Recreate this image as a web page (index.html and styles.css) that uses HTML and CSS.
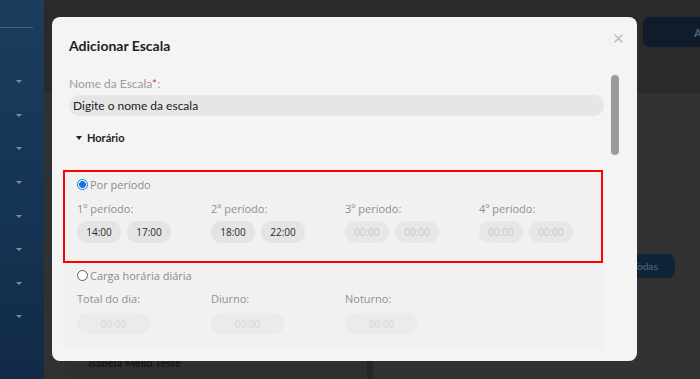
FILE: index.html
```html
<!DOCTYPE html>
<html lang="pt-BR">
<head>
<meta charset="utf-8">
<title>Adicionar Escala</title>
<link rel="stylesheet" href="styles.css">
</head>
<body>
<div class="app">
  <aside class="sidebar">
    <div class="sidebar-line"></div>
    <ul class="menu">
      <li><span class="caret"></span></li>
      <li><span class="caret"></span></li>
      <li><span class="caret"></span></li>
      <li><span class="caret"></span></li>
      <li><span class="caret"></span></li>
      <li><span class="caret"></span></li>
      <li><span class="caret"></span></li>
      <li><span class="caret"></span></li>
    </ul>
  </aside>
  <main class="main">
    <header class="topbar">
      <button class="btn-top">Adicionar</button>
    </header>
    <section class="content">
      <div class="card-left"><span class="person">Isabela Mello Teste</span></div>
      <div class="divider"></div>
      <div class="card-right"><button class="btn-todas">Todas</button></div>
    </section>
  </main>

  <div class="overlay">
    <div class="modal">
      <button class="close" aria-label="Fechar">
        <svg width="9" height="9" viewBox="0 0 9 9"><path d="M1 1L8 8M8 1L1 8" stroke="#bdbdbd" stroke-width="1.6" stroke-linecap="round"/></svg>
      </button>
      <div class="modal-header">
        <h2 class="modal-title">Adicionar Escala</h2>
      </div>
      <div class="modal-body">
        <div class="form">
          <div class="field">
            <label class="field-label">Nome da Escala<span class="req">*</span>:</label>
            <div class="input">Digite o nome da escala</div>
          </div>
          <div class="section-toggle"><span class="tri"></span>Horário</div>
          <div class="panel">
            <div class="option option-active">
              <div class="radio-row"><span class="radio checked"></span>Por período</div>
              <div class="periods">
                <div class="period">
                  <div class="period-label">1º período:</div>
                  <div class="pills"><span class="pill">14:00</span><span class="pill">17:00</span></div>
                </div>
                <div class="period">
                  <div class="period-label">2º período:</div>
                  <div class="pills"><span class="pill">18:00</span><span class="pill">22:00</span></div>
                </div>
                <div class="period">
                  <div class="period-label">3º período:</div>
                  <div class="pills"><span class="pill empty">00:00</span><span class="pill empty">00:00</span></div>
                </div>
                <div class="period">
                  <div class="period-label">4º período:</div>
                  <div class="pills"><span class="pill empty">00:00</span><span class="pill empty">00:00</span></div>
                </div>
              </div>
            </div>
            <div class="option option-second">
              <div class="radio-row"><span class="radio"></span>Carga horária diária</div>
              <div class="periods periods-second">
                <div class="period">
                  <div class="period-label">Total do dia:</div>
                  <div class="pills"><span class="pill wide disabled">00:00</span></div>
                </div>
                <div class="period">
                  <div class="period-label">Diurno:</div>
                  <div class="pills"><span class="pill wide disabled">00:00</span></div>
                </div>
                <div class="period">
                  <div class="period-label">Noturno:</div>
                  <div class="pills"><span class="pill wide disabled">00:00</span></div>
                </div>
              </div>
            </div>
          </div>
        </div>
        <div class="scrollbar"></div>
      </div>
    </div>
  </div>
</div>
</body>
</html>
```

FILE: styles.css
```css
* { box-sizing: border-box; }
html, body { margin: 0; padding: 0; }
body {
  width: 700px;
  height: 379px;
  overflow: hidden;
  background: #2b2b2b;
  font-family: "Open Sans", "Noto Sans", sans-serif;
}
.app {
  position: relative;
  display: flex;
  width: 700px;
  height: 379px;
}
.sidebar {
  width: 44px;
  flex: none;
  background: linear-gradient(180deg, #1b3e5c 0%, #163555 50%, #112a47 100%);
  display: flex;
  flex-direction: column;
}
.sidebar-line {
  margin-top: 27px;
  width: 33px;
  height: 1px;
  background: #56606c;
}
.menu {
  list-style: none;
  margin: 37px 0 0;
  padding: 0;
}
.menu li {
  height: 33.6px;
  display: flex;
  align-items: center;
  padding-left: 16px;
}
.caret {
  width: 0;
  height: 0;
  border-left: 3px solid transparent;
  border-right: 3px solid transparent;
  border-top: 3px solid #838d98;
}
.main {
  flex: 1;
  min-width: 0;
  display: flex;
  flex-direction: column;
}
.topbar {
  height: 93px;
  background: #2a2a2a;
  display: flex;
  justify-content: flex-end;
  align-items: flex-start;
  padding-top: 17px;
  overflow: hidden;
}
.btn-top {
  flex: none;
  width: 57px;
  height: 30px;
  border: none;
  border-radius: 7px 0 0 7px;
  background: #0e1c2c;
  color: #556270;
  font: 700 11px "Lato", sans-serif;
  text-align: left;
  padding-left: 51px;
  overflow: hidden;
  white-space: nowrap;
}
.content {
  flex: 1;
  display: flex;
  background: #313131;
  padding-left: 22px;
}
.card-left {
  width: 301px;
  background: #2f2f2f;
  padding: 257px 0 0 22px;
}
.person {
  font: 700 11px/14px "Lato", sans-serif;
  color: #151515;
}
.divider {
  width: 6px;
  background: #262626;
}
.card-right {
  width: 304px;
  margin-left: 7px;
  background: #323232;
  display: flex;
  flex-direction: column;
  align-items: flex-end;
  padding: 161px 9px 0 0;
}
.btn-todas {
  width: 60px;
  height: 24px;
  border: none;
  border-radius: 7px;
  background: #0f2438;
  color: #4b5a69;
  font: 700 10px "Lato", sans-serif;
}

/* overlay + modal */
.overlay {
  position: absolute;
  inset: 0;
  display: flex;
  padding: 17px 63px 18px 52px;
}
.modal {
  position: relative;
  flex: 1;
  min-width: 0;
  background: #f4f4f4;
  border-radius: 8px;
  display: flex;
  flex-direction: column;
  overflow: hidden;
}
.close {
  position: absolute;
  top: 17px;
  right: 14px;
  width: 9px;
  height: 9px;
  padding: 0;
  border: none;
  background: none;
  display: flex;
}
.modal-header {
  padding: 20px 17px 0;
}
.modal-title {
  margin: 0;
  font: 700 14px/18px "Lato", sans-serif;
  color: #1e1e1e;
}
.modal-body {
  flex: 1;
  min-height: 0;
  display: flex;
  margin-top: 20px;
  overflow: hidden;
}
.form {
  flex: 1;
  min-width: 0;
  padding-left: 11px;
}
.scrollbar {
  flex: none;
  width: 8px;
  height: 80px;
  margin: 0 18px 0 7px;
  border-radius: 4px;
  background: #9b9b9b;
}
.field {
  padding-left: 6px;
}
.field-label {
  display: block;
  font: 400 12px/18px "Lato", sans-serif;
  color: #9c9c9c;
}
.req { color: #e53935; }
.input {
  margin-top: 2px;
  height: 21px;
  border-radius: 10px;
  background: #e6e6e6;
  padding-left: 4px;
  font: 400 12px/21px "Lato", sans-serif;
  color: #202020;
}
.section-toggle {
  margin-top: 14px;
  padding-left: 13px;
  display: flex;
  align-items: center;
  height: 16px;
  font: 700 11px/16px "Lato", sans-serif;
  color: #1e1e1e;
}
.tri {
  width: 0;
  height: 0;
  border-left: 3px solid transparent;
  border-right: 3px solid transparent;
  border-top: 4px solid #222;
  margin-right: 5px;
}
.panel {
  margin-top: 24px;
  margin-right: 1px;
  background: #f1f1f1;
  padding-bottom: 15px;
}
.option-active {
  border: 2px solid #ff0000;
  padding: 5px 0 18px 12px;
}
.option-second {
  padding: 5px 0 0 14px;
}
.radio-row {
  display: flex;
  align-items: center;
  height: 14px;
  font-size: 11px;
  color: #8c8c8c;
}
.radio {
  width: 11px;
  height: 11px;
  border-radius: 50%;
  border: 1px solid #5f5f5f;
  background: #fff;
  margin-right: 2px;
}
.radio.checked {
  border: 1.5px solid #1a73e8;
  background: radial-gradient(circle, #1a73e8 0 3.2px, #fff 3.7px);
}
.periods {
  display: grid;
  grid-template-columns: 134px 134px 134px minmax(0, 1fr);
  margin-top: 11px;
}
.periods-second {
  margin-top: 10px;
}
.period-label {
  height: 14px;
  font-size: 11px;
  line-height: 14px;
  color: #8f8f8f;
}
.pills {
  display: flex;
  gap: 6px;
  margin-top: 5px;
}
.periods-second .pills { margin-top: 7px; }
.pill {
  width: 44px;
  height: 22px;
  border-radius: 10px;
  background: #e4e4e4;
  display: flex;
  align-items: center;
  justify-content: center;
  font-size: 10px;
  color: #2a2a2a;
}
.pill.empty {
  background: #e7e7e7;
  color: #c8c8c8;
}
.pill.wide {
  width: 73px;
  height: 21px;
}
.pill.disabled {
  background: #ebebeb;
  color: #d6d6d6;
}
```
